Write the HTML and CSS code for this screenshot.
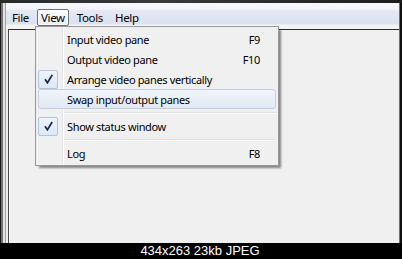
FILE: index.html
```html
<!DOCTYPE html>
<html lang="en">
<head>
    <meta charset="UTF-8">
    <meta name="viewport" content="width=device-width, initial-scale=1.0">
    <title>View menu</title>
    <link rel="stylesheet" href="styles.css">
</head>
<body>
    <div class="screen">
        <div class="window">
            <div class="title-edge"></div>
            <div class="menubar">
                <span class="menu-item">File</span>
                <span class="menu-item open">View</span>
                <span class="menu-item">Tools</span>
                <span class="menu-item">Help</span>
            </div>
            <div class="menubar-gap"></div>
            <div class="client"></div>
        </div>
        <div class="caption">434x263 23kb JPEG</div>

        <!-- opened View menu -->
        <div class="dropdown">
            <div class="menu-row">
                <span class="check-cell"></span>
                <span class="label">Input video pane</span>
                <span class="shortcut">F9</span>
            </div>
            <div class="menu-row">
                <span class="check-cell"></span>
                <span class="label">Output video pane</span>
                <span class="shortcut">F10</span>
            </div>
            <div class="menu-row">
                <span class="check-cell checked">
                    <svg width="9" height="10" viewBox="0 0 9 10"><path d="M1 5.2 L3.4 8.8 L8.2 1" fill="none" stroke="#1b2850" stroke-width="1.7"/></svg>
                </span>
                <span class="label">Arrange video panes vertically</span>
            </div>
            <div class="menu-row hover">
                <span class="check-cell"></span>
                <span class="label">Swap input/output panes</span>
            </div>
            <div class="separator"></div>
            <div class="menu-row">
                <span class="check-cell checked">
                    <svg width="9" height="10" viewBox="0 0 9 10"><path d="M1 5.2 L3.4 8.8 L8.2 1" fill="none" stroke="#1b2850" stroke-width="1.7"/></svg>
                </span>
                <span class="label">Show status window</span>
            </div>
            <div class="separator"></div>
            <div class="menu-row">
                <span class="check-cell"></span>
                <span class="label">Log</span>
                <span class="shortcut">F8</span>
            </div>
        </div>
    </div>
</body>
</html>
```

FILE: styles.css
```css
body {
    margin: 0;
    padding: 0;
    background-color: #000;
    font-family: "Noto Sans", "Open Sans", sans-serif;
    font-size: 11px;
    letter-spacing: -0.35px;
    color: #000;
}
.screen {
    position: relative;
    width: 402px;
    height: 259px;
    overflow: hidden;
    background-color: #000;
}

/* Window frame */
.window {
    height: 243px;
    display: flex;
    flex-direction: column;
    padding: 0 3px 0 6px;
    background:
        linear-gradient(to left, #111 0 2px, #6e6e6e 2px 3px, transparent 3px),
        linear-gradient(to right, #1a1a1a 0 1px, #747474 1px 3px, #e4e4e4 3px 5px, #a2a2a2 5px 6px, #f0f0f0 6px);
}
.title-edge {
    height: 3px;
    margin: 0 -3px 0 -6px;
    background: linear-gradient(to right, #2a2a2a, #3a3a3a 40%, #1c1c1c);
}

/* Menu bar */
.menubar {
    height: 23px;
    display: flex;
    align-items: flex-end;
    padding-left: 2px;
    background: linear-gradient(#f6f7fb 0, #f4f6fa 5px, #e4e8f4 8px, #dbe1ef 21px, #f3f4f7 22px);
}
.menu-item {
    height: 15px;
    line-height: 15px;
    padding: 0 3px;
    margin-right: 4px;
    border: 1px solid transparent;
    border-radius: 2px;
    font-size: 11.5px;
}
.menu-item.open {
    border-color: #6f7177;
    background: linear-gradient(#fbfcfd, #e9ecf3);
    box-shadow: inset 0 0 0 1px rgba(255,255,255,0.7);
}
.menubar-gap {
    height: 3px;
    background-color: #f3f3f3;
}
.client {
    flex: 1;
    margin-left: 2px;
    border-top: 1px solid #2c2c2c;
    border-left: 1px solid #4a4a4a;
    background-color: #f0f0f0;
    box-shadow: inset 1px 0 0 #fff;
}

.caption {
    height: 16px;
    line-height: 16px;
    text-align: center;
    padding-right: 2px;
    color: #fff;
    font-family: "Liberation Sans", Arial, sans-serif;
    font-size: 13px;
    letter-spacing: 0;
}

/* View dropdown */
.dropdown {
    position: absolute;
    left: 35px;
    top: 26px;
    width: 238px;
    padding: 2px;
    border: 1px solid #979797;
    background:
        linear-gradient(to right, transparent 26px, #e2e3e3 26px 27px, #fff 27px 28px, transparent 28px),
        #f0f0f0;
    box-shadow: 3px 3px 2px -1px rgba(0,0,0,0.45);
}
.menu-row {
    height: 20px;
    display: flex;
    align-items: center;
    padding-right: 16px;
    box-sizing: border-box;
}
.menu-row.hover {
    border: 1px solid #c3d0e3;
    border-radius: 3px;
    background: linear-gradient(#f1f4fa, #e3e9f3);
    padding-right: 15px;
}
.menu-row.hover .check-cell {
    margin-left: -1px;
}
.check-cell {
    width: 20px;
    height: 19px;
    flex-shrink: 0;
    display: flex;
    align-items: center;
    justify-content: center;
    box-sizing: border-box;
}
.check-cell.checked {
    border: 1px solid #aac5e8;
    border-radius: 2px;
    background: linear-gradient(#eef4fc, #dde9f7);
}
.label {
    margin-left: 9px;
    flex: 1;
    white-space: nowrap;
}
.shortcut {
    white-space: nowrap;
}
.separator {
    margin: 3px 0 2px 26px;
    border-top: 1px solid #e0e0e0;
    border-bottom: 1px solid #fff;
    height: 0;
}
```
